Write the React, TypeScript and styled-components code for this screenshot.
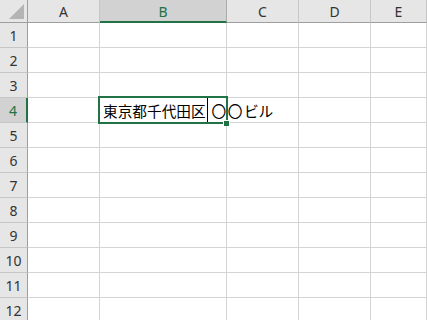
import React from 'react'
import styled, { createGlobalStyle } from 'styled-components'

const GlobalStyle = createGlobalStyle`
html, body {
  margin: 0;
  padding: 0;
  background: #ffffff;
  overflow: hidden;
}
`

const columns = ['A', 'B', 'C', 'D', 'E']
const rows = Array.from({ length: 12 }, (_, i) => i + 1)
const activeCol = 'B'
const activeRow = 4

const Sheet = styled.div`
display: grid;
grid-template-columns: 28px 72px 127px 72px 72px 1fr;
grid-auto-rows: 25px;
grid-template-rows: 23px;
width: 427px;
height: 320px;
overflow: hidden;
background: #ffffff;
font-family: "Noto Sans", "Noto Sans CJK JP", sans-serif;
`

const Corner = styled.div`
display: flex;
align-items: flex-end;
justify-content: flex-end;
padding: 0 2px 2px 0;
background: #e6e6e6;
border-right: 1px solid #9e9e9e;
border-bottom: 1px solid #9e9e9e;
box-sizing: border-box;
`

const ColHead = styled.div<{ $active?: boolean }>`
display: flex;
align-items: center;
justify-content: center;
box-sizing: border-box;
background: ${p => (p.$active ? '#d2d2d2' : '#e6e6e6')};
color: ${p => (p.$active ? '#217346' : '#333333')};
border-right: 1px solid ${p => (p.$active ? '#ababab' : '#c6c6c6')};
border-bottom: ${p => (p.$active ? '2px solid #217346' : '1px solid #9e9e9e')};
font-size: 14px;
padding-top: ${p => (p.$active ? '1px' : '0')};
`

const RowHead = styled.div<{ $active?: boolean }>`
display: flex;
align-items: center;
justify-content: center;
box-sizing: border-box;
background: ${p => (p.$active ? '#d2d2d2' : '#e6e6e6')};
color: ${p => (p.$active ? '#217346' : '#333333')};
border-right: ${p => (p.$active ? '2px solid #217346' : '1px solid #9e9e9e')};
border-bottom: 1px solid #c6c6c6;
font-size: 14px;
`

const Cell = styled.div<{ $active?: boolean }>`
position: relative;
display: flex;
align-items: center;
padding-left: 3px;
box-sizing: border-box;
border-right: 1px solid #d4d4d4;
border-bottom: 1px solid #d4d4d4;
z-index: ${p => (p.$active ? 2 : 0)};
`

const Selection = styled.div`
position: absolute;
left: -2px;
top: -2px;
right: -2px;
bottom: -2px;
border: 2px solid #217346;
pointer-events: none;
`

const FillHandle = styled.div`
position: absolute;
right: -4px;
bottom: -4px;
width: 5px;
height: 5px;
background: #217346;
border: 1px solid #ffffff;
border-bottom: none;
`

const CellText = styled.div`
display: flex;
align-items: center;
white-space: nowrap;
font-family: "Noto Sans CJK JP", sans-serif;
font-size: 14.67px;
color: #000000;
`

const Caret = styled.span`
display: inline-block;
width: 1px;
height: 24px;
background: #000000;
margin: 0 4px 0 1px;
`

const Circles = styled.span`
letter-spacing: 1.5px;
`

const Triangle = () => (
  <svg width="16" height="16" viewBox="0 0 16 16">
    <polygon points="15,0 15,15 0,15" fill="#b4b4b4" />
  </svg>
)

export default function App() {
  return (
    <>
      <GlobalStyle />
      <Sheet>
        <Corner>
          <Triangle />
        </Corner>
        {columns.map(c => (
          <ColHead key={c} $active={c === activeCol}>{c}</ColHead>
        ))}
        {rows.map(r => (
          <React.Fragment key={r}>
            <RowHead $active={r === activeRow}>{r}</RowHead>
            {columns.map(c => {
              const active = r === activeRow && c === activeCol
              return (
                <Cell key={c} $active={active}>
                  {active && (
                    <>
                      <CellText>
                        東京都千代田区<Caret /><Circles>〇〇</Circles>ビル
                      </CellText>
                      <Selection>
                        <FillHandle />
                      </Selection>
                    </>
                  )}
                </Cell>
              )
            })}
          </React.Fragment>
        ))}
      </Sheet>
    </>
  )
}
